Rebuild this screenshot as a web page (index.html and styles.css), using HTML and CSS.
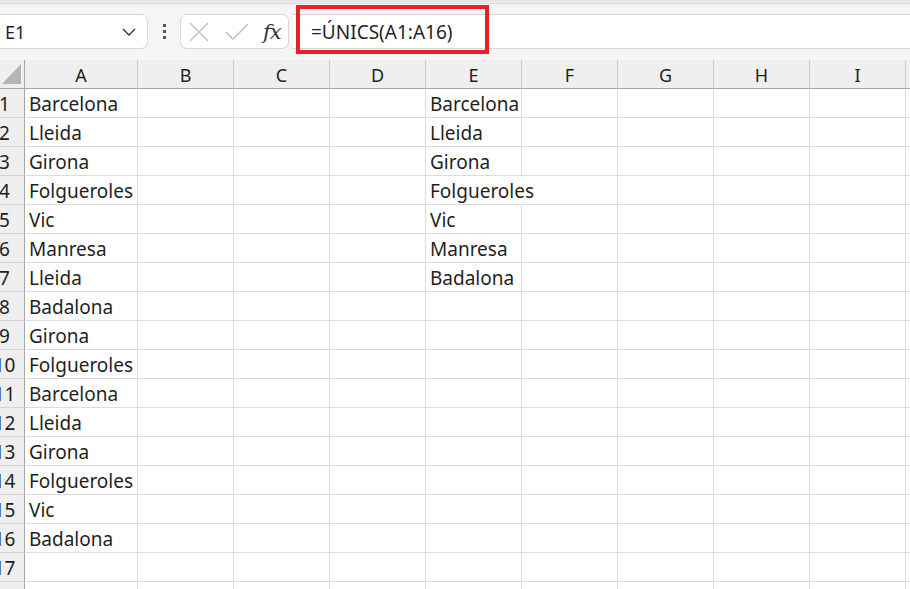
FILE: index.html
```html
<!DOCTYPE html>
<html lang="ca">
<head>
  <meta charset="UTF-8" />
  <title>Llibre1 - Excel</title>
  <link rel="stylesheet" href="styles.css">
</head>
<body>

  <!-- Formula bar -->
  <div class="toolbar">
    <div class="ribbon-edge"></div>
    <div class="formula-row">
      <div class="name-box">
        <span>E1</span>
        <svg class="chevron" width="14" height="8" viewBox="0 0 14 8">
          <path d="M1 1 L7 7 L13 1" fill="none" stroke="#333" stroke-width="1.4"/>
        </svg>
      </div>
      <div class="grip">
        <i></i><i></i><i></i>
      </div>
      <div class="fx-box">
        <svg width="22" height="22" viewBox="0 0 22 22">
          <path d="M2 2 L20 20 M20 2 L2 20" stroke="#c4c4c4" stroke-width="1.6" fill="none"/>
        </svg>
        <svg width="26" height="22" viewBox="0 0 26 22">
          <path d="M2 11 L9 18 L24 3" stroke="#c4c4c4" stroke-width="1.6" fill="none"/>
        </svg>
        <span class="fx">fx</span>
      </div>
      <div class="formula-input">
        <span>=ÚNICS(A1:A16)</span>
      </div>
    </div>
    <div class="highlight"></div>
  </div>

  <!-- Sheet grid -->
  <div class="sheet">
    <table class="grid">
      <colgroup>
        <col class="c-row"><col class="c-a"><col><col><col><col><col><col><col><col><col>
      </colgroup>
      <thead>
        <tr>
          <th class="corner"><span></span></th>
          <th>A</th><th>B</th><th>C</th><th>D</th><th>E</th><th>F</th><th>G</th><th>H</th><th>I</th><th></th>
        </tr>
      </thead>
      <tbody>
        <tr><th>1</th><td>Barcelona</td><td></td><td></td><td></td><td>Barcelona</td><td></td><td></td><td></td><td></td><td></td></tr>
        <tr><th>2</th><td>Lleida</td><td></td><td></td><td></td><td>Lleida</td><td></td><td></td><td></td><td></td><td></td></tr>
        <tr><th>3</th><td>Girona</td><td></td><td></td><td></td><td>Girona</td><td></td><td></td><td></td><td></td><td></td></tr>
        <tr><th>4</th><td>Folgueroles</td><td></td><td></td><td></td><td class="spill">Folgueroles</td><td></td><td></td><td></td><td></td><td></td></tr>
        <tr><th>5</th><td>Vic</td><td></td><td></td><td></td><td>Vic</td><td></td><td></td><td></td><td></td><td></td></tr>
        <tr><th>6</th><td>Manresa</td><td></td><td></td><td></td><td>Manresa</td><td></td><td></td><td></td><td></td><td></td></tr>
        <tr><th>7</th><td>Lleida</td><td></td><td></td><td></td><td>Badalona</td><td></td><td></td><td></td><td></td><td></td></tr>
        <tr><th>8</th><td>Badalona</td><td></td><td></td><td></td><td></td><td></td><td></td><td></td><td></td><td></td></tr>
        <tr><th>9</th><td>Girona</td><td></td><td></td><td></td><td></td><td></td><td></td><td></td><td></td><td></td></tr>
        <tr><th>10</th><td>Folgueroles</td><td></td><td></td><td></td><td></td><td></td><td></td><td></td><td></td><td></td></tr>
        <tr><th>11</th><td>Barcelona</td><td></td><td></td><td></td><td></td><td></td><td></td><td></td><td></td><td></td></tr>
        <tr><th>12</th><td>Lleida</td><td></td><td></td><td></td><td></td><td></td><td></td><td></td><td></td><td></td></tr>
        <tr><th>13</th><td>Girona</td><td></td><td></td><td></td><td></td><td></td><td></td><td></td><td></td><td></td></tr>
        <tr><th>14</th><td>Folgueroles</td><td></td><td></td><td></td><td></td><td></td><td></td><td></td><td></td><td></td></tr>
        <tr><th>15</th><td>Vic</td><td></td><td></td><td></td><td></td><td></td><td></td><td></td><td></td><td></td></tr>
        <tr><th>16</th><td>Badalona</td><td></td><td></td><td></td><td></td><td></td><td></td><td></td><td></td><td></td></tr>
        <tr><th>17</th><td></td><td></td><td></td><td></td><td></td><td></td><td></td><td></td><td></td><td></td></tr>
        <tr><th>18</th><td></td><td></td><td></td><td></td><td></td><td></td><td></td><td></td><td></td><td></td></tr>
      </tbody>
    </table>
  </div>

</body>
</html>
```

FILE: styles.css
```css
* {
  box-sizing: border-box;
}

body {
  margin: 0;
  font-family: "Noto Sans", "Open Sans", sans-serif;
  color: #1f1f1f;
  background: #ffffff;
  overflow: hidden;
}

/* ---------- formula bar ---------- */

.toolbar {
  position: relative;
  height: 60px;
  background: #f5f5f5;
}

.ribbon-edge {
  height: 4px;
  background: linear-gradient(#e4e4e4, #ececec);
  border-bottom: 1px solid #dcdcdc;
}

.formula-row {
  display: flex;
  align-items: center;
  height: 35px;
  margin-top: 10px;
}

.name-box {
  display: flex;
  align-items: center;
  justify-content: space-between;
  width: 156px;
  height: 35px;
  margin-left: -8px;
  padding: 0 11px 0 12px;
  background: #fff;
  border: 1px solid #d6d6d6;
  border-radius: 7px;
  font-size: 18px;
}

.grip {
  display: flex;
  flex-direction: column;
  gap: 3px;
  width: 32px;
  align-items: center;
}

.grip i {
  display: block;
  width: 3px;
  height: 3px;
  background: #555;
}

.fx-box {
  display: flex;
  align-items: center;
  width: 109px;
  height: 35px;
  padding: 0 6px 0 7px;
  gap: 14px;
  background: #fff;
  border: 1px solid #d6d6d6;
  border-radius: 7px;
}

.fx {
  font-family: "DejaVu Serif", "Liberation Serif", serif;
  font-style: italic;
  font-size: 21px;
  color: #333;
  margin-left: -1px;
  letter-spacing: -1px;
}

.formula-input {
  flex: 1;
  height: 35px;
  margin-left: 4px;
  padding-left: 18px;
  display: flex;
  align-items: center;
  background: #fff;
  border-top: 1px solid #d6d6d6;
  border-bottom: 1px solid #d6d6d6;
  font-size: 19px;
}

/* red frame drawn around the formula */
.highlight {
  position: absolute;
  left: 296px;
  top: 5px;
  width: 193px;
  height: 49px;
  border: 4px solid #e8202a;
}

/* ---------- sheet grid ---------- */

.sheet {
  overflow: hidden;
}

.grid {
  margin-left: -15px;
  border-collapse: separate;
  border-spacing: 0;
  table-layout: fixed;
  width: 1017px;
  font-size: 19px;
}

.grid col {
  width: 96px;
}

.grid col.c-row {
  width: 40px;
}

.grid col.c-a {
  width: 113px;
}

.grid thead th {
  height: 29px;
  padding: 1px 0 0;
  background: #efefef;
  font-weight: normal;
  font-size: 18px;
  border-right: 1px solid #c8c8c8;
  border-bottom: 1px solid #a6a6a6;
  text-align: center;
  vertical-align: middle;
}

.grid thead th.corner {
  text-align: right;
  vertical-align: bottom;
  padding: 0 3px 4px 0;
  border-right: 1px solid #a6a6a6;
}

.corner span {
  display: inline-block;
  width: 19px;
  height: 20px;
  background: #b5b5b5;
  clip-path: polygon(100% 0, 100% 100%, 0 100%);
  vertical-align: bottom;
}

.grid tbody th {
  height: 29px;
  padding: 2px 0 0;
  background: #efefef;
  font-weight: normal;
  text-align: center;
  border-right: 1px solid #a6a6a6;
  border-bottom: 1px solid #d4d4d4;
}

.grid td {
  height: 29px;
  padding: 2px 0 0 4px;
  white-space: nowrap;
  overflow: hidden;
  border-right: 1px solid #dcdcdc;
  border-bottom: 1px solid #dcdcdc;
}

/* text that runs on into the empty cell beside it */
.grid td.spill {
  overflow: visible;
  border-right-color: #fff;
}
```
